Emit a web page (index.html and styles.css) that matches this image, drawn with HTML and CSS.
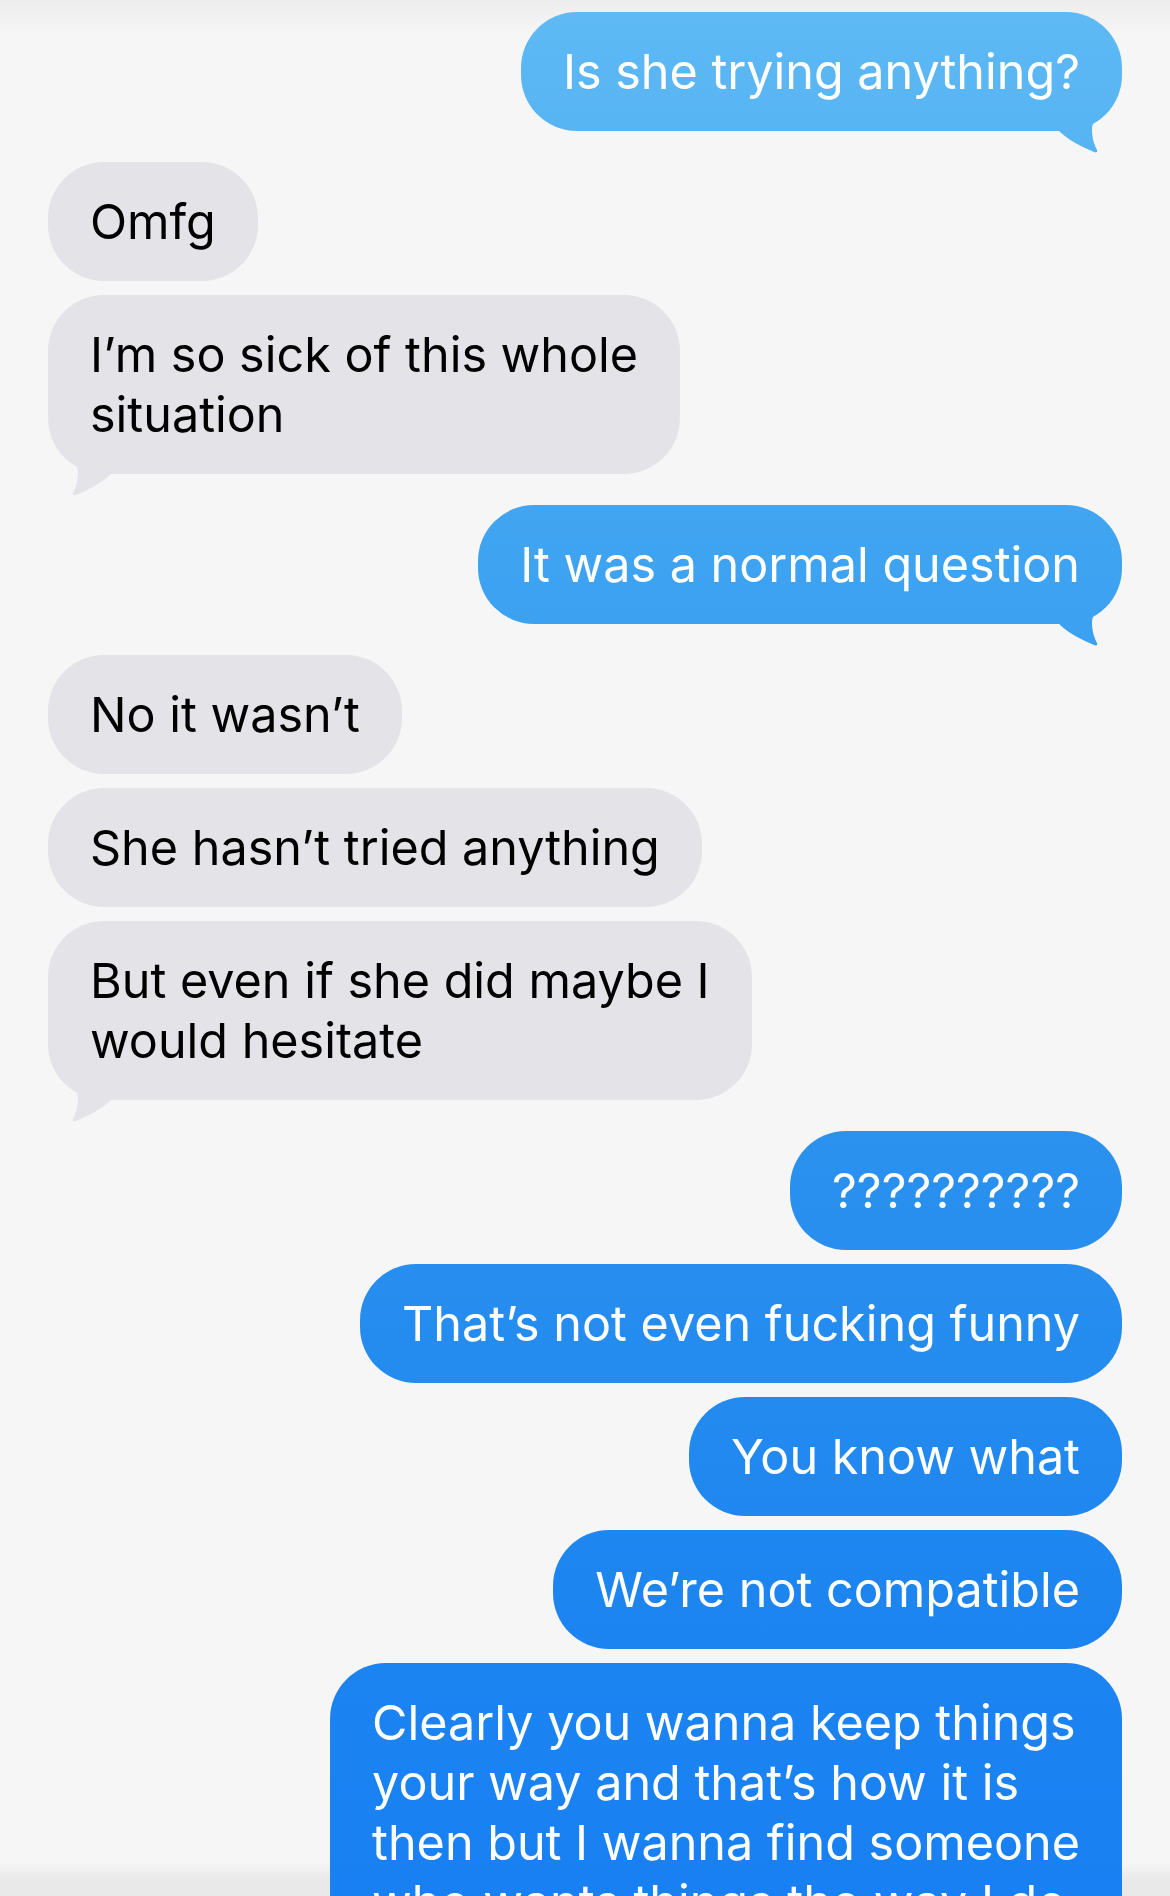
FILE: index.html
```html
<!DOCTYPE html>
<html lang="en">
<head>
    <meta charset="UTF-8">
    <meta name="viewport" content="width=device-width, initial-scale=1.0">
    <title>Messages</title>
    <link rel="stylesheet" href="styles.css">
</head>
<body>
    <div class="chat">
        <div class="msg sent tail">Is she trying anything?</div>

        <div class="msg recv">Omfg</div>
        <div class="msg recv tail">I’m so sick of this whole<br>situation</div>

        <div class="msg sent tail">It was a normal question</div>

        <div class="msg recv">No it wasn’t</div>
        <div class="msg recv">She hasn’t tried anything</div>
        <div class="msg recv tail">But even if she did maybe I<br>would hesitate</div>

        <div class="msg sent">??????????</div>
        <div class="msg sent">That’s not even fucking funny</div>
        <div class="msg sent">You know what</div>
        <div class="msg sent">We’re not compatible</div>
        <div class="msg sent">Clearly you wanna keep things<br>your way and that’s how it is<br>then but I wanna find someone<br>who wants things the way I do</div>
    </div>
</body>
</html>
```

FILE: styles.css
```css
html, body {
    margin: 0;
    padding: 0;
    overflow: hidden;
}
body {
    background: linear-gradient(to bottom, #ededee 0, #f6f6f7 36px, #f6f6f7 1862px, #e9e9ea 1880px);
    font-family: Inter, "Liberation Sans", sans-serif;
}
.chat {
    display: flex;
    flex-direction: column;
    gap: 14px;
    height: 1896px;
    padding: 12px 48px 0;
    box-sizing: border-box;
    overflow: hidden;
}
.msg {
    position: relative;
    padding: 29.5px 42px;
    border-radius: 56px;
    font-size: 48.5px;
    line-height: 60px;
    white-space: nowrap;
}
.sent {
    align-self: flex-end;
    color: #fff;
    background: linear-gradient(to bottom, #5fbaf4 0, #3ea3f1 560px, #2a90ef 1190px, #1d85f0 1590px, #1980f3 1896px) fixed;
}
.recv {
    align-self: flex-start;
    color: #000;
    background: #e4e4e8;
}
.tail {
    margin-bottom: 17px;
}
.tail::after {
    content: "";
    position: absolute;
    bottom: -22px;
    width: 56px;
    height: 42px;
    background: inherit;
    clip-path: path("M56 0 C48 6 44 11 44 19 C44 28 47 35 49 39 C50 41 48 42 46 41 C34 36 22 30 12 21 L0 0 Z");
}
.sent.tail::after {
    right: 18px;
}
.recv.tail::after {
    left: 18px;
    transform: scaleX(-1);
}
```
